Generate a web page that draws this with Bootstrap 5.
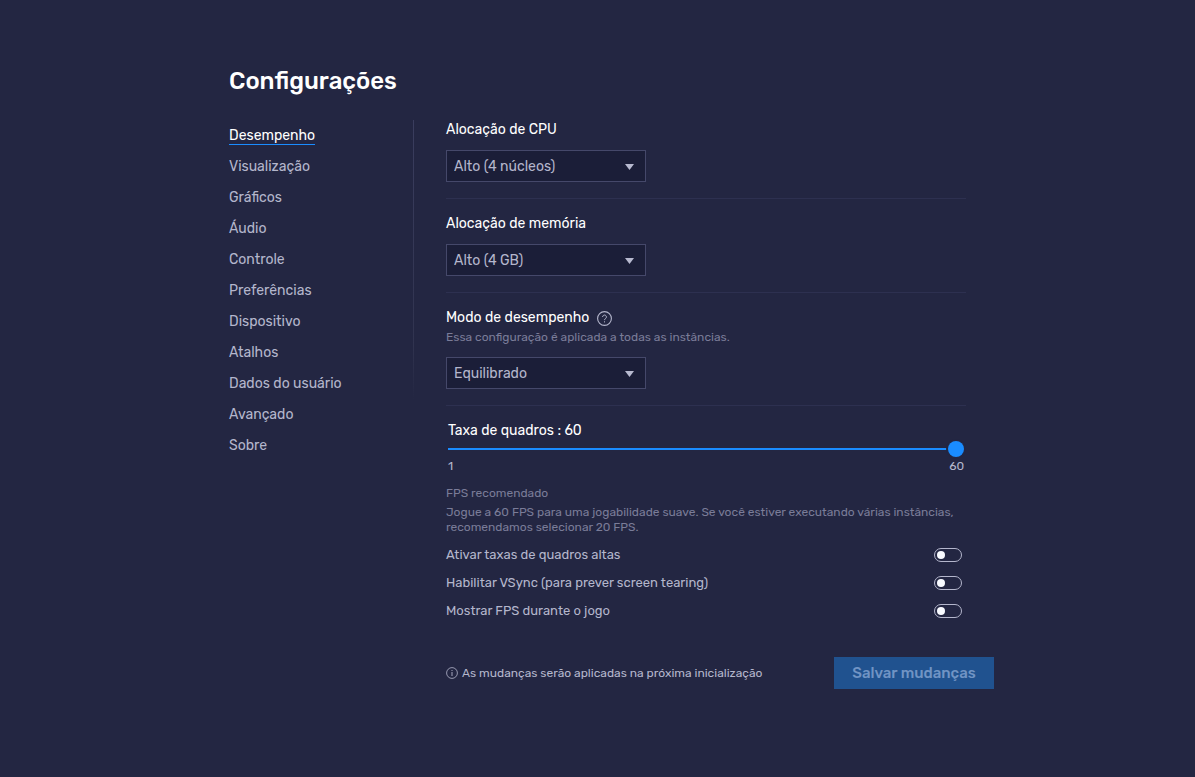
<!DOCTYPE html>
<html lang="pt-BR">
<head>
<meta charset="utf-8">
<meta name="viewport" content="width=device-width, initial-scale=1">
<title>Configurações</title>
<link href="https://cdn.jsdelivr.net/npm/bootstrap@5.3.0/dist/css/bootstrap.min.css" rel="stylesheet">
<style>
  body {
    --page: #232642;
    --muted: #7a7c98;
    --soft: #b4b6cc;
    --accent: #1a8cff;
    background: var(--page);
    color: var(--soft);
    font-family: Rubik, Roboto, "Noto Sans", sans-serif;
    font-size: 14px;
    line-height: 18px;
  }
  .settings { max-width: 737px; padding-top: 65px; }
  .page-title { font-size: 24px; line-height: 32px; font-weight: 500; margin-bottom: 23px; }
  .side { width: 185px; }
  .side::after {
    content: "";
    position: absolute;
    top: 0;
    right: 0;
    width: 1px;
    height: 280px;
    background: linear-gradient(#3a3d5e, #30334f 80%, var(--page));
  }
  .side .nav { padding-top: 7px; gap: 13px; }
  .side .nav-link { padding: 0; color: var(--soft); border-bottom: 1px solid transparent; line-height: 17px; transition: none; }
  .side .nav-link.active { color: #fff; border-bottom-color: var(--accent); }
  .side .nav-link:hover { color: #fff; }
  .panel { padding-left: 32px; }
  .setting { padding-bottom: 16px; margin-bottom: 15px; border-bottom: 1px solid #2d3050; }
  .heading { color: #fff; display: block; line-height: 20px; }
  .hint { font-size: 12px; line-height: 16px; color: var(--muted); }
  .setting .form-select {
    width: 200px;
    height: 32px;
    margin-top: 10px;
    padding: 2px 32px 0 7px;
    border: 1px solid #45486a;
    border-radius: 0;
    color: var(--soft);
    font-size: 14px;
    line-height: 20px;
    background: #1b1e38 url("data:image/svg+xml,%3Csvg xmlns='http://www.w3.org/2000/svg' viewBox='0 0 9 6'%3E%3Cpath fill='%23b8bad0' d='M0 0h9L4.500 6z'/%3E%3C/svg%3E") no-repeat right 11px top 13px / 9px 6px;
  }
  .setting .hint { margin-top: 1px; }
  .setting .hint + .form-select { margin-top: 12px; }
  .help { width: 15px; height: 15px; color: var(--soft); }
  .rate { padding: 0 2px; }
  .rate .form-range { height: 16px; display: block; }
  .rate .form-range::-webkit-slider-runnable-track { height: 2px; background: var(--accent); border-radius: 0; }
  .rate .form-range::-webkit-slider-thumb { background: var(--accent); margin-top: -7px; box-shadow: 0 0 0 2px var(--page); }
  .ticks { font-size: 12px; line-height: 16px; margin-top: 1px; }
  .advice { margin-top: 11px; }
  .advice p { line-height: 15px; margin-top: 4px; }
  .toggles { margin-top: 6px; padding-right: 4px; font-size: 13px; }
  .toggle-row { height: 28px; }
  .toggle-row .form-check-input {
    width: 28px;
    height: 14px;
    margin: 0;
    border: 1px solid var(--soft);
    border-radius: 7px;
    background: transparent url("data:image/svg+xml,%3Csvg xmlns='http://www.w3.org/2000/svg' viewBox='0 0 8 8'%3E%3Ccircle cx='4' cy='4' r='4' fill='%23f8faff'/%3E%3C/svg%3E") no-repeat left 2px center / 8px 8px;
  }
  .toggle-row .form-check-input:checked { background-color: var(--accent); background-position: right 2px center; }
  .actions { margin-top: 32px; margin-right: -28px; font-size: 12px; }
  .save {
    --bs-btn-disabled-bg: #20528f;
    --bs-btn-disabled-border-color: #20528f;
    --bs-btn-disabled-color: #7094c4;
    --bs-btn-disabled-opacity: 1;
    width: 160px;
    height: 32px;
    padding: 0;
    border-radius: 0;
    font-size: 15px;
    line-height: 20px;
    font-weight: 500;
  }
</style>
</head>
<body>
<main class="settings mx-auto">
  <h1 class="page-title text-white">Configurações</h1>
  <div class="d-flex align-items-start">
    <div class="side position-relative flex-shrink-0">
      <nav class="nav flex-column align-items-start" aria-label="Configurações">
        <a class="nav-link active" aria-current="page" href="#">Desempenho</a>
        <a class="nav-link" href="#">Visualização</a>
        <a class="nav-link" href="#">Gráficos</a>
        <a class="nav-link" href="#">Áudio</a>
        <a class="nav-link" href="#">Controle</a>
        <a class="nav-link" href="#">Preferências</a>
        <a class="nav-link" href="#">Dispositivo</a>
        <a class="nav-link" href="#">Atalhos</a>
        <a class="nav-link" href="#">Dados do usuário</a>
        <a class="nav-link" href="#">Avançado</a>
        <a class="nav-link" href="#">Sobre</a>
      </nav>
    </div>
    <form class="panel flex-grow-1">
      <div class="setting">
        <label class="heading" for="cpu">Alocação de CPU</label>
        <select class="form-select" id="cpu"><option>Alto (4 núcleos)</option></select>
      </div>
      <div class="setting">
        <label class="heading" for="memory">Alocação de memória</label>
        <select class="form-select" id="memory"><option>Alto (4 GB)</option></select>
      </div>
      <div class="setting">
        <div class="d-flex align-items-center gap-2">
          <label class="heading" for="mode">Modo de desempenho</label>
          <svg class="help" viewBox="0 0 15 15" fill="none" stroke="currentColor" role="img" aria-label="Ajuda"><circle cx="7.500" cy="7.500" r="6.900" stroke-width="1.100"/><path d="M5.600 6a1.900 1.900 0 1 1 3 1.500c-.7.500-1.100.8-1.100 1.600"/><path d="M7.500 10.300v1.100"/></svg>
        </div>
        <p class="hint mb-0">Essa configuração é aplicada a todas as instâncias.</p>
        <select class="form-select" id="mode"><option>Equilibrado</option></select>
      </div>
      <div class="rate">
        <label class="heading" for="fps">Taxa de quadros : 60</label>
        <input class="form-range" type="range" id="fps" min="1" max="60" value="60">
        <div class="ticks d-flex justify-content-between"><span>1</span><span>60</span></div>
      </div>
      <div class="advice">
        <div class="hint">FPS recomendado</div>
        <p class="hint mb-0">Jogue a 60 FPS para uma jogabilidade suave. Se você estiver executando várias instâncias, recomendamos selecionar 20 FPS.</p>
      </div>
      <div class="toggles">
        <div class="toggle-row d-flex align-items-center justify-content-between">
          <label for="high">Ativar taxas de quadros altas</label>
          <input class="form-check-input" type="checkbox" role="switch" id="high">
        </div>
        <div class="toggle-row d-flex align-items-center justify-content-between">
          <label for="vsync">Habilitar VSync (para prever screen tearing)</label>
          <input class="form-check-input" type="checkbox" role="switch" id="vsync">
        </div>
        <div class="toggle-row d-flex align-items-center justify-content-between">
          <label for="show">Mostrar FPS durante o jogo</label>
          <input class="form-check-input" type="checkbox" role="switch" id="show">
        </div>
      </div>
      <div class="actions d-flex align-items-center justify-content-between">
        <div class="d-flex align-items-center gap-1">
          <svg width="12" height="12" viewBox="0 0 12 12" fill="none" stroke="currentColor" aria-hidden="true"><circle cx="6" cy="6" r="5.400" stroke-width=".8"/><path d="M6 5v4M6 3v1" stroke-width=".9"/></svg>
          <span>As mudanças serão aplicadas na próxima inicialização</span>
        </div>
        <button class="btn btn-primary save" type="submit" disabled>Salvar mudanças</button>
      </div>
    </form>
  </div>
</main>
<script src="https://cdn.jsdelivr.net/npm/bootstrap@5.3.0/dist/js/bootstrap.bundle.min.js"></script>
</body>
</html>
